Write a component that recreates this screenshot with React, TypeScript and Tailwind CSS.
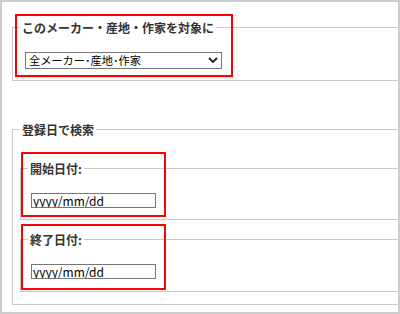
import React from "react"

const legendCls = "px-[2px] text-[12px] leading-[15px] font-bold text-[#333333]"
const fieldsetCls = "border border-[#c8c8c8] pl-[7px] pr-0"

const DateField = ({ label, className }: { label: string; className?: string }) => (
    <fieldset className={`${fieldsetCls} pt-[17px] ${className ?? ""}`}>
        <legend className={legendCls}>{label}</legend>
        <input
            type="text"
            defaultValue="yyyy/mm/dd"
            className="block h-[15px] w-[125px] ml-[3px] border border-[#767676] bg-white px-[1px] py-0 text-[12px] leading-[13px] text-black outline-none"
        />
    </fieldset>
)

export default function App() {
    return (
        <div className="relative w-[400px] h-[314px] overflow-hidden border-2 border-[#cccccc] bg-white pl-[10px] pt-[18px] font-['Noto_Sans_CJK_JP','Liberation_Sans',sans-serif]">
            <fieldset className={`${fieldsetCls} pt-[17px] pb-[11px] mr-[-12px]`}>
                <legend className={legendCls}>このメーカー・産地・作家を対象に</legend>
                <div className="relative ml-[5px] w-[197px] h-[17px]">
                    <select className="block appearance-none w-full h-full border border-[#767676] bg-white pl-[3px] py-0 text-[11.2px] leading-[15px] text-black outline-none">
                        <option>全メーカー･産地･作家</option>
                    </select>
                    <svg className="pointer-events-none absolute right-[4px] top-[5px]" width="10" height="6" viewBox="0 0 10 6">
                        <path d="M1 1 L5 5 L9 1" fill="none" stroke="#222222" strokeWidth="1.8" />
                    </svg>
                </div>
            </fieldset>

            <fieldset className={`${fieldsetCls} mt-[41px] pt-[24px] pb-[12px] mr-[-12px]`}>
                <legend className={legendCls}>登録日で検索</legend>
                <DateField label="開始日付:" className="pb-[11px]" />
                <DateField label="終了日付:" className="mt-[12px] pb-[12px]" />
            </fieldset>

            {/* highlight frames */}
            <div className="pointer-events-none absolute left-[13px] top-[12px] w-[218px] h-[63px] border-2 border-[#ff0000] shadow-[0_1px_1px_rgba(255,0,0,0.12)]" />
            <div className="pointer-events-none absolute left-[19px] top-[150px] w-[145px] h-[65px] border-2 border-[#ff0000]" />
            <div className="pointer-events-none absolute left-[19px] top-[222px] w-[145px] h-[66px] border-2 border-[#ff0000]" />
        </div>
    )
}
